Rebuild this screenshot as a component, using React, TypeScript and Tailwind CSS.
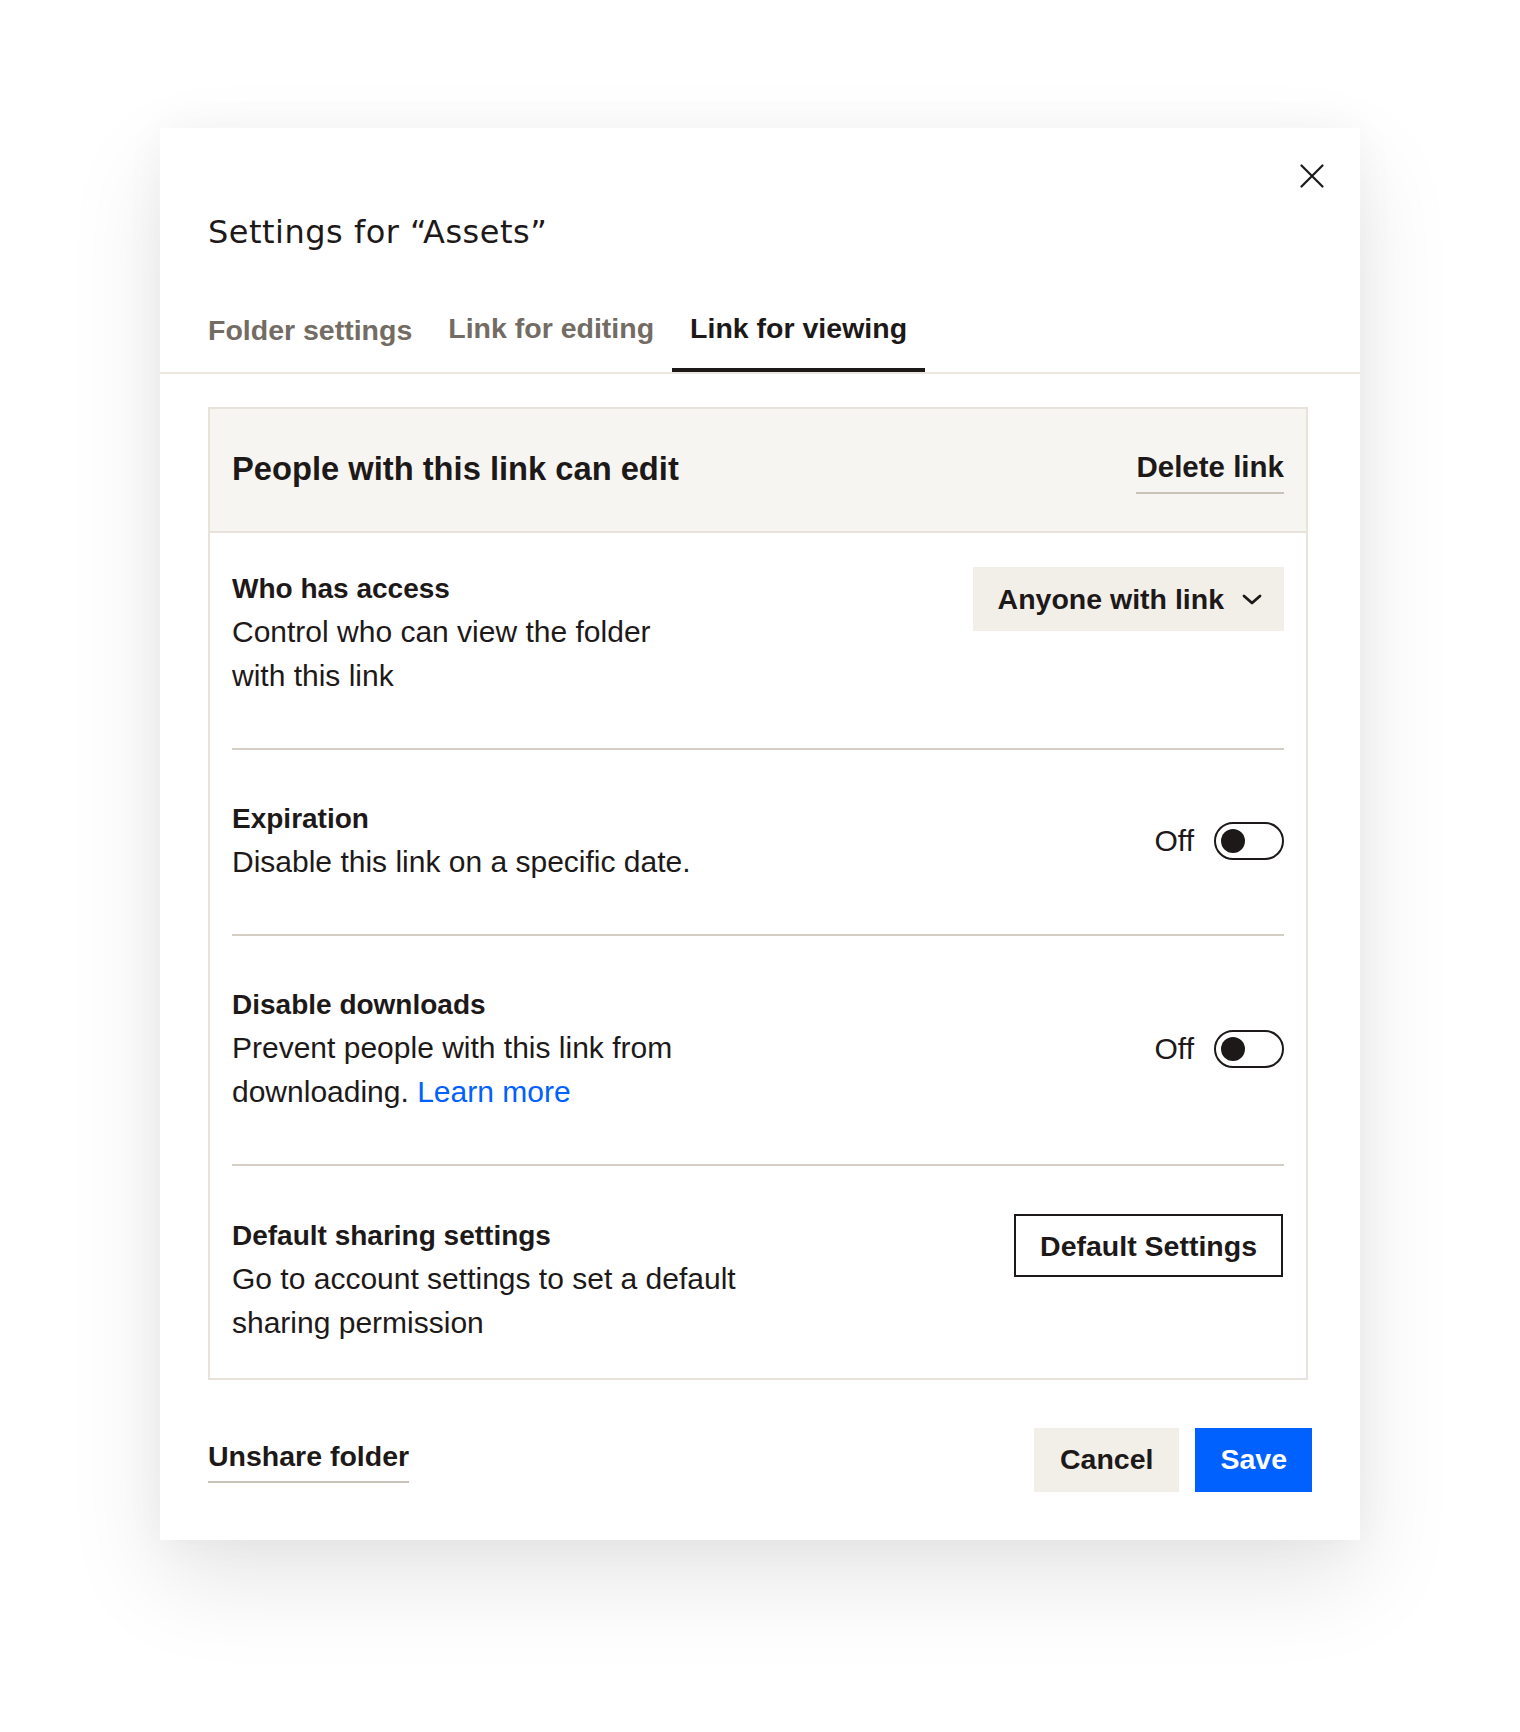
import React from "react";

function Toggle() {
  return (
    <div className="flex h-[38px] w-[70px] items-center rounded-full border-2 border-[#1e1919] pl-[5px]">
      <div className="h-[24px] w-[24px] rounded-full bg-[#1e1919]" />
    </div>
  );
}

function Tab({ label, active, first }: { label: string; active?: boolean; first?: boolean }) {
  return (
    <div
      className={
        "px-[18px] pb-[22px] text-[28.5px] font-bold leading-[36px] border-b-4 " +
        (active ? "border-[#1e1919] text-[#1e1919]" : "border-transparent text-[#736c64]")
      }
    >
      <span className={first ? "relative top-[2px]" : ""}>{label}</span>
    </div>
  );
}

export default function App() {
  return (
    <div className="min-h-[1732px] w-full bg-white pt-[128px] font-['Liberation_Sans',Arial,sans-serif] text-[#1e1919]">
      <div className="mx-auto w-[1200px] bg-white pb-[48px] shadow-[0_40px_90px_rgba(0,0,0,0.10),0_0_40px_rgba(0,0,0,0.04)]">
        {/* close */}
        <div className="flex justify-end pr-[36px] pt-[36px]">
          <svg width="24" height="24" viewBox="0 0 24 24" fill="none">
            <path d="M1.5 1.5 L22.5 22.5 M22.5 1.5 L1.5 22.5" stroke="#1e1919" strokeWidth="2.2" strokeLinecap="round" />
          </svg>
        </div>
        {/* title */}
        <div className="px-[48px]">
          <h1 className="mt-[24px] font-['DejaVu_Sans',sans-serif] text-[32px] font-normal leading-[40px] tracking-[0.5px] text-[#1e1919]">
            Settings for “Assets”
          </h1>
        </div>
        {/* tabs */}
        <div className="mt-[58px] border-b-2 border-[#ebe7e0]">
          <div className="flex pl-[30px]">
            <Tab label="Folder settings" first />
            <Tab label="Link for editing" />
            <Tab label="Link for viewing" active />
          </div>
        </div>
        {/* box */}
        <div className="mt-[33px] pl-[48px] pr-[52px]">
          <div className="border-2 border-[#e8e3da]">
            <div className="flex h-[124px] items-start justify-between border-b-2 border-[#e8e3da] bg-[#f7f5f2] px-[22px] pt-[40px]">
              <div className="text-[32.7px] font-bold leading-[40px]">People with this link can edit</div>
              <div className="border-b-2 border-[#c9c2b8] pb-[7px] text-[29.5px] font-bold leading-[36px]">Delete link</div>
            </div>
            <div className="px-[22px]">
              {/* row 1 */}
              <div className="flex items-start justify-between border-b-2 border-[#d3cdc4] pb-[50px] pt-[34px]">
                <div>
                  <div className="text-[28px] font-bold leading-[43px]">Who has access</div>
                  <div className="text-[30px] leading-[44px]">
                    Control who can view the folder
                    <br />
                    with this link
                  </div>
                </div>
                <div className="flex h-[64px] items-center gap-[18px] bg-[#f2efe9] pl-[25px] pr-[22px]">
                  <span className="text-[28.5px] font-bold leading-[36px]">Anyone with link</span>
                  <svg width="20" height="11" viewBox="0 0 20 11" fill="none">
                    <path d="M2 2 L10 9 L18 2" stroke="#1e1919" strokeWidth="2.8" strokeLinecap="round" strokeLinejoin="round" />
                  </svg>
                </div>
              </div>
              {/* row 2 */}
              <div className="flex items-center justify-between border-b-2 border-[#d3cdc4] pb-[50px] pt-[47px]">
                <div>
                  <div className="text-[28px] font-bold leading-[43px]">Expiration</div>
                  <div className="text-[30px] leading-[44px]">Disable this link on a specific date.</div>
                </div>
                <div className="flex items-center gap-[20px]">
                  <span className="text-[30px] leading-[44px]">Off</span>
                  <Toggle />
                </div>
              </div>
              {/* row 3 */}
              <div className="flex items-center justify-between border-b-2 border-[#d3cdc4] pb-[50px] pt-[47px]">
                <div>
                  <div className="text-[28px] font-bold leading-[43px]">Disable downloads</div>
                  <div className="text-[30px] leading-[44px]">
                    Prevent people with this link from
                    <br />
                    downloading. <span className="text-[#0061fe]">Learn more</span>
                  </div>
                </div>
                <div className="flex items-center gap-[20px]">
                  <span className="text-[30px] leading-[44px]">Off</span>
                  <Toggle />
                </div>
              </div>
              {/* row 4 */}
              <div className="flex items-start justify-between pb-[33px] pt-[48px]">
                <div>
                  <div className="text-[28px] font-bold leading-[43px]">Default sharing settings</div>
                  <div className="text-[30px] leading-[44px]">
                    Go to account settings to set a default
                    <br />
                    sharing permission
                  </div>
                </div>
                <div className="mr-[1px] flex h-[63px] items-center border-2 border-[#1e1919] px-[24px]">
                  <span className="text-[28.5px] font-bold leading-[36px]">Default Settings</span>
                </div>
              </div>
            </div>
          </div>
        </div>
        {/* footer */}
        <div className="mt-[48px] flex items-center justify-between px-[48px]">
          <div className="border-b-2 border-[#c9c2b8] pb-[7px] text-[28.5px] font-bold leading-[36px]">Unshare folder</div>
          <div className="flex items-center gap-[16px]">
            <div className="flex h-[64px] items-center bg-[#f2efe9] px-[26px] pb-[3px] text-[28.5px] font-bold leading-[36px]">Cancel</div>
            <div className="flex h-[64px] items-center bg-[#0061fe] px-[25px] pb-[3px] text-[28.5px] font-bold leading-[36px] text-white">Save</div>
          </div>
        </div>
      </div>
    </div>
  );
}
